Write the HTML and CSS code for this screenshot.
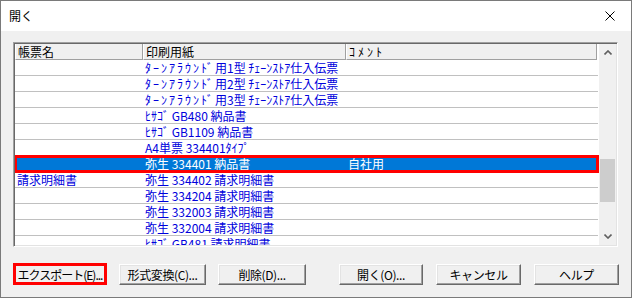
FILE: index.html
```html
<html>
<head>
<meta charset="UTF-8">
<meta name="viewport" content="width=device-width, initial-scale=1.0">
<link rel="stylesheet" href="styles.css">
</head>
<body>
<div class="dialog">
    <div class="titlebar">
        <span class="title">開く</span>
        <span class="close">
            <svg width="10" height="10" viewBox="0 0 10 10"><path d="M0.5 0.5L9.5 9.5M9.5 0.5L0.5 9.5" stroke="#000" stroke-width="1" fill="none"/></svg>
        </span>
    </div>
    <div class="client">
        <div class="listbox">
            <div class="listview">
                <div class="head">
                    <div class="hcell c1">帳票名</div>
                    <div class="hcell c2">印刷用紙</div>
                    <div class="hcell c3"><span class="kana-wide">ｺﾒﾝﾄ</span></div>
                </div>
                <div class="row"><div class="cell c1"></div><div class="cell c2"><span class="kana">ﾀｰﾝｱﾗｳﾝﾄﾞ</span>用1型 ﾁｪｰﾝｽﾄｱ仕入伝票</div><div class="cell c3"></div></div>
                <div class="row"><div class="cell c1"></div><div class="cell c2"><span class="kana">ﾀｰﾝｱﾗｳﾝﾄﾞ</span>用2型 ﾁｪｰﾝｽﾄｱ仕入伝票</div><div class="cell c3"></div></div>
                <div class="row"><div class="cell c1"></div><div class="cell c2"><span class="kana">ﾀｰﾝｱﾗｳﾝﾄﾞ</span>用3型 ﾁｪｰﾝｽﾄｱ仕入伝票</div><div class="cell c3"></div></div>
                <div class="row"><div class="cell c1"></div><div class="cell c2">ﾋｻｺﾞ GB480 納品書</div><div class="cell c3"></div></div>
                <div class="row"><div class="cell c1"></div><div class="cell c2">ﾋｻｺﾞ GB1109 納品書</div><div class="cell c3"></div></div>
                <div class="row"><div class="cell c1"></div><div class="cell c2">A4単票 334401ﾀｲﾌﾟ</div><div class="cell c3"></div></div>
                <div class="row selected"><div class="cell c1"></div><div class="cell c2">弥生 334401 納品書</div><div class="cell c3">自社用</div></div>
                <div class="row"><div class="cell c1">請求明細書</div><div class="cell c2">弥生 334402 請求明細書</div><div class="cell c3"></div></div>
                <div class="row"><div class="cell c1"></div><div class="cell c2">弥生 334204 請求明細書</div><div class="cell c3"></div></div>
                <div class="row"><div class="cell c1"></div><div class="cell c2">弥生 332003 請求明細書</div><div class="cell c3"></div></div>
                <div class="row"><div class="cell c1"></div><div class="cell c2">弥生 332004 請求明細書</div><div class="cell c3"></div></div>
                <div class="row"><div class="cell c1"></div><div class="cell c2">ﾋｻｺﾞ GB481 請求明細書</div><div class="cell c3"></div></div>
            </div>
            <div class="scrollbar">
                <div class="sb-btn">
                    <svg width="8" height="5" viewBox="0 0 8 5"><path d="M0.5 4.5L4 1L7.5 4.5" stroke="#606060" stroke-width="1.6" fill="none"/></svg>
                </div>
                <div class="thumb"></div>
                <div class="sb-btn down">
                    <svg width="8" height="5" viewBox="0 0 8 5"><path d="M0.5 0.5L4 4L7.5 0.5" stroke="#606060" stroke-width="1.6" fill="none"/></svg>
                </div>
            </div>
        </div>
        <div class="buttons">
            <button class="btn marked w-export">エクスポート(E)...</button>
            <button class="btn w-convert">形式変換(C)...</button>
            <button class="btn w-delete">削除(D)...</button>
            <button class="btn w-open push-right">開く(O)...</button>
            <button class="btn w-std">キャンセル</button>
            <button class="btn w-std">ヘルプ</button>
        </div>
    </div>
</div>
</body>
</html>
```

FILE: styles.css
```css
* { margin: 0; padding: 0; box-sizing: border-box; }
body { font-family: "Noto Sans CJK JP", "Liberation Sans", sans-serif; font-size: 12px; background: #fff; }

.dialog { width: 632px; height: 298px; border: 1px solid #7a7a7a; display: flex; flex-direction: column; }
.dialog .titlebar { height: 30px; background: #fff; display: flex; align-items: center; padding: 0 16px 0 8px; }
.dialog .titlebar .title { flex: 1; color: #000; font-size: 12px; line-height: 16px; }
.dialog .titlebar .close { display: flex; }

.dialog .client { flex: 1; background: #f0f0f0; padding: 11px 12px 0 12px; }

/* list */
.listbox { width: 605px; height: 205px; display: flex; background: #fff;
    border-top: 1px solid #a0a0a0; border-left: 1px solid #a0a0a0; border-right: 1px solid #fff; border-bottom: 1px solid #fff;
    box-shadow: inset 1px 1px 0 #696969, inset -1px -1px 0 #e3e3e3; padding: 1px; }
.listview { width: 584px; overflow: hidden; }
.head { display: flex; height: 16px; }
.hcell { height: 16px; line-height: 15px; padding-left: 2px; background: #f0f0f0; color: #000; white-space: nowrap;
    border-left: 1px solid #fff; border-right: 1px solid #a0a0a0; border-bottom: 1px solid #a0a0a0; }
.c1 { width: 128px; }
.c2 { width: 203px; }
.c3 { width: 251px; }
.kana { letter-spacing: 2px; }
.kana-wide { letter-spacing: 3px; }

.row { display: flex; width: 583px; height: 16px; border-bottom: 1px solid #c0c0c0; color: #0000dc; }
.cell { line-height: 15px; padding-left: 2px; white-space: nowrap; }
.row.selected { background: #0078d7; color: #fff; border-bottom-color: #0078d7; outline: 3px solid #ff0000; outline-offset: -2px; position: relative; }

.scrollbar { width: 17px; background: #f0f0f0; display: flex; flex-direction: column; }
.sb-btn { height: 17px; display: flex; align-items: center; justify-content: center; }
.sb-btn.down { margin-top: auto; }
.thumb { margin: 98px 1px 0 1px; height: 43px; background: #cdcdcd; }

/* buttons */
.buttons { display: flex; gap: 12px; margin-top: 17px; }
.btn { height: 21px; padding: 0; white-space: nowrap; font-family: inherit; font-size: 12px; line-height: 15px; letter-spacing: -0.4px; color: #000; background: #f0f0f0;
    border: 1px solid; border-color: #fff #696969 #696969 #fff; box-shadow: inset -1px -1px 0 #a0a0a0, inset 1px 1px 0 #e3e3e3; }
.btn.marked { border: 3px solid #ff0000; box-shadow: none; height: 22px; margin-top: -1px; letter-spacing: -1px; }
.w-export { width: 94px; }
.w-convert { width: 87px; }
.w-delete { width: 88px; }
.w-open { width: 84px; }
.w-std { width: 85px; }
.push-right { margin-left: auto; }
.buttons .w-std { margin-left: 1px; }
```
